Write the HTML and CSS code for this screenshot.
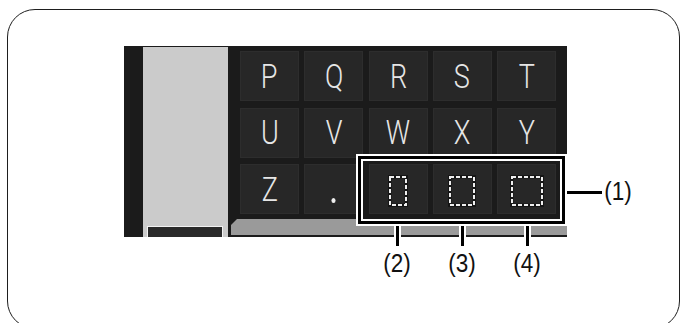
FILE: index.html
```html
<!DOCTYPE html>
<html lang="en">
<head>
  <meta charset="UTF-8" />
  <title>Character keyboard</title>
  <link rel="stylesheet" href="styles.css">
</head>
<body>

<div class="frame">
  <div class="figure">
    <div class="panel">
      <div class="edge"></div>
      <div class="column">
        <div class="column-tab"></div>
      </div>
      <div class="keys-area">
        <div class="keys">
          <div class="key"><span>P</span></div>
          <div class="key"><span>Q</span></div>
          <div class="key"><span>R</span></div>
          <div class="key"><span>S</span></div>
          <div class="key"><span>T</span></div>
          <div class="key"><span>U</span></div>
          <div class="key"><span>V</span></div>
          <div class="key"><span>W</span></div>
          <div class="key"><span>X</span></div>
          <div class="key"><span>Y</span></div>
          <div class="key"><span>Z</span></div>
          <div class="key"><span class="dot"></span></div>
          <div class="key">
            <svg class="space" width="20" height="32" viewBox="0 0 20 32">
              <rect x="1" y="1" width="18" height="30" fill="none" stroke="#111" stroke-width="5" opacity="0.8" />
              <rect x="2" y="2" width="16" height="28" fill="none" stroke="#eee" stroke-width="2" stroke-dasharray="4 2" />
            </svg>
          </div>
          <div class="key">
            <svg class="space" width="28" height="32" viewBox="0 0 28 32">
              <rect x="1" y="1" width="26" height="30" fill="none" stroke="#111" stroke-width="5" opacity="0.8" />
              <rect x="2" y="2" width="24" height="28" fill="none" stroke="#eee" stroke-width="2" stroke-dasharray="4 2" />
            </svg>
          </div>
          <div class="key">
            <svg class="space" width="34" height="32" viewBox="0 0 34 32">
              <rect x="1" y="1" width="32" height="30" fill="none" stroke="#111" stroke-width="5" opacity="0.8" />
              <rect x="2" y="2" width="30" height="28" fill="none" stroke="#eee" stroke-width="2" stroke-dasharray="4 2" />
            </svg>
          </div>
        </div>
        <div class="strip"></div>
      </div>
    </div>

    <!-- callouts -->
    <div class="callout-box"></div>
    <div class="leader leader-h"></div>
    <div class="leader leader-v lv2"></div>
    <div class="leader leader-v lv3"></div>
    <div class="leader leader-v lv4"></div>
    <div class="label l1">(1)</div>
    <div class="label l2">(2)</div>
    <div class="label l3">(3)</div>
    <div class="label l4">(4)</div>
  </div>
</div>

</body>
</html>
```

FILE: styles.css
```css
body {
  margin: 0;
  background: #ffffff;
  font-family: 'Liberation Sans', Arial, sans-serif;
  overflow: hidden;
  height: 323px;
}

.frame {
  margin: 9px 1px 0 7px;
  height: 320px;
  border: 1.5px solid #1e1e1e;
  border-radius: 28px;
  box-sizing: border-box;
  padding: 36px 0 0 116px;
}

.figure {
  position: relative;
  width: 443px;
}

.panel {
  display: flex;
  height: 191px;
  background: #1b1b1b;
}

.edge {
  width: 19px;
}

.column {
  width: 85px;
  background: #cbcbcb;
  margin-top: 1px;
  display: flex;
  align-items: flex-end;
  justify-content: center;
}

.column-tab {
  width: 74px;
  height: 10px;
  margin-left: -1px;
  background: #2a2a2a;
  border: 1.5px solid #f2f2f2;
  border-bottom: none;
}

.keys-area {
  flex: 1;
  display: flex;
  flex-direction: column;
  padding: 5px 11px 0 12px;
}

.keys {
  display: grid;
  grid-template-columns: repeat(5, 59px);
  grid-auto-rows: 50px;
  column-gap: 5.25px;
  row-gap: 6.5px;
}

.key {
  background: #272727;
  box-shadow: inset 0 0 0 1px #2d2d2d;
  color: #e6e6e6;
  font-family: Roboto, 'DejaVu Sans', sans-serif;
  font-weight: 300;
  font-size: 33px;
  display: flex;
  align-items: center;
  justify-content: center;
}

.key span {
  display: inline-block;
  transform: scaleX(0.82);
}

.dot {
  width: 5px;
  height: 5px;
  border-radius: 50%;
  background: #eeeeee;
  margin-top: 22px;
}

.space {
  margin-top: 4px;
}

.strip {
  height: 16px;
  margin: 5px -11px 0 -9px;
  background: #9a9a9a;
  clip-path: polygon(6px 0, 100% 0, 100% 100%, 0 100%, 0 6px);
}

.callout-box {
  position: absolute;
  left: 232px;
  top: 108px;
  width: 211px;
  height: 72px;
  box-sizing: border-box;
  border: 2.5px solid #ffffff;
  box-shadow: inset 0 0 0 3px #000000, inset 0 0 0 5px #ffffff;
}

.leader {
  position: absolute;
  background: #000000;
  box-sizing: border-box;
}

.leader-h {
  left: 443px;
  top: 142.5px;
  width: 35px;
  height: 7px;
  border-top: 2px solid #ffffff;
  border-bottom: 2px solid #ffffff;
}

.leader-v {
  top: 180px;
  width: 7px;
  height: 20px;
  border-left: 2px solid #ffffff;
  border-right: 2px solid #ffffff;
}

.lv2 { left: 270px; }
.lv3 { left: 335px; }
.lv4 { left: 400px; }

.label {
  position: absolute;
  width: 40px;
  text-align: center;
  font-size: 25px;
  line-height: 26px;
  color: #111111;
  transform: scaleX(0.9);
}

.l1 { left: 474px; top: 132px; }
.l2 { left: 253px; top: 204px; }
.l3 { left: 318px; top: 204px; }
.l4 { left: 383px; top: 204px; }
```
